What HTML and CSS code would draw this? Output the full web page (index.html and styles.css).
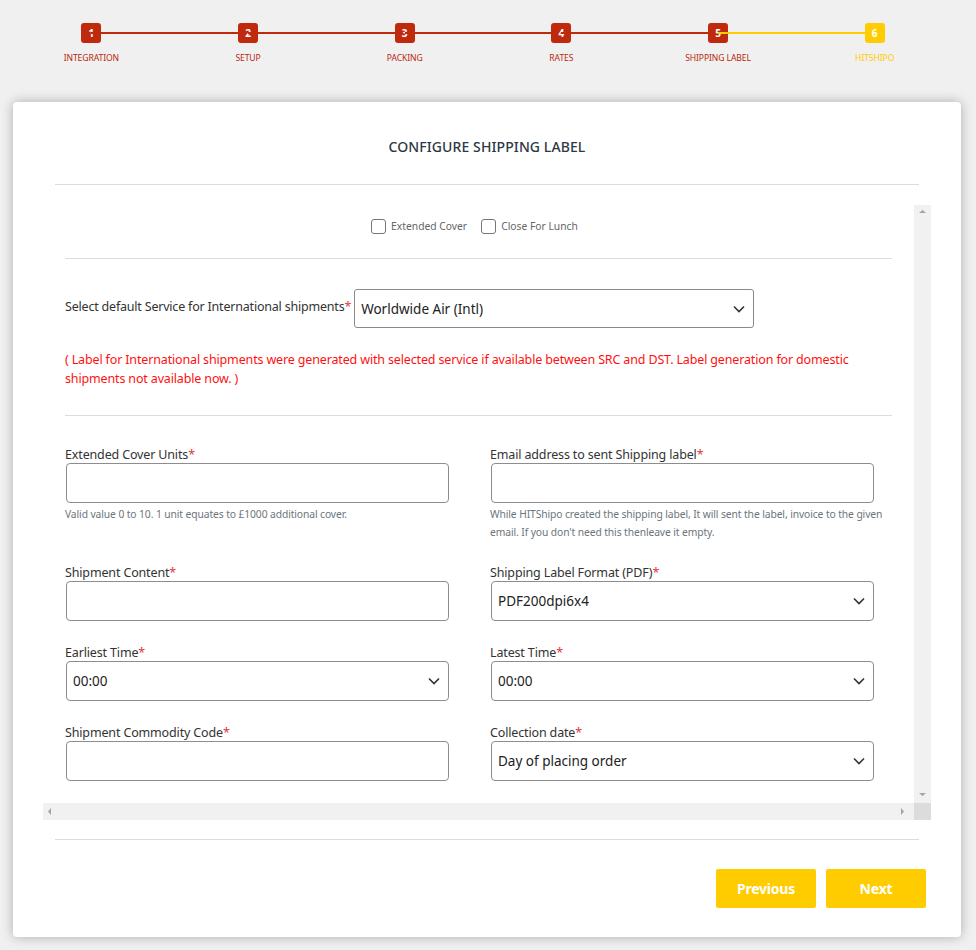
FILE: index.html
```html
<!DOCTYPE html>
<html lang="en">
<head>
<meta charset="utf-8">
<title>Configure Shipping Label</title>
<link rel="stylesheet" href="styles.css">
</head>
<body>
<div class="stepper">
  <div class="step done"><div class="num">1</div><div class="lbl">INTEGRATION</div></div>
  <div class="step done"><div class="num">2</div><div class="lbl">SETUP</div></div>
  <div class="step done"><div class="num">3</div><div class="lbl">PACKING</div></div>
  <div class="step done"><div class="num">4</div><div class="lbl">RATES</div></div>
  <div class="step done"><div class="num">5</div><div class="lbl">SHIPPING LABEL</div></div>
  <div class="step active"><div class="num">6</div><div class="lbl">HITSHIPO</div></div>
</div>

<div class="card">
  <h2 class="title">CONFIGURE SHIPPING LABEL</h2>
  <div class="rule"></div>

  <div class="scrollbox">
    <div class="viewport">
      <div class="content">
        <div class="checks">
          <label class="check"><span class="box"></span>Extended Cover</label>
          <label class="check"><span class="box"></span>Close For Lunch</label>
        </div>
        <div class="inner-rule"></div>
        <div class="service-row">
          <span class="service-label">Select default Service for International shipments<span class="req">*</span></span>
          <div class="select wide"><span>Worldwide Air (Intl)</span><svg class="chev" width="12" height="8" viewBox="0 0 12 8"><polyline points="1,1.5 6,6.5 11,1.5" fill="none" stroke="#333" stroke-width="1.6"/></svg></div>
        </div>
        <p class="notice">( Label for International shipments were generated with selected service if available between SRC and DST. Label generation for domestic shipments not available now. )</p>
        <div class="inner-rule second"></div>

        <div class="grid">
          <div class="field tall">
            <div class="flabel">Extended Cover Units<span class="req">*</span></div>
            <div class="input"></div>
            <div class="help">Valid value 0 to 10. 1 unit equates to £1000 additional cover.</div>
          </div>
          <div class="field tall">
            <div class="flabel">Email address to sent Shipping label<span class="req">*</span></div>
            <div class="input"></div>
            <div class="help">While HITShipo created the shipping label, It will sent the label, invoice to the given email. If you don't need this thenleave it empty.</div>
          </div>
          <div class="field">
            <div class="flabel">Shipment Content<span class="req">*</span></div>
            <div class="input"></div>
          </div>
          <div class="field">
            <div class="flabel">Shipping Label Format (PDF)<span class="req">*</span></div>
            <div class="input select"><span>PDF200dpi6x4</span><svg class="chev" width="12" height="8" viewBox="0 0 12 8"><polyline points="1,1.5 6,6.5 11,1.5" fill="none" stroke="#333" stroke-width="1.6"/></svg></div>
          </div>
          <div class="field">
            <div class="flabel">Earliest Time<span class="req">*</span></div>
            <div class="input select"><span>00:00</span><svg class="chev" width="12" height="8" viewBox="0 0 12 8"><polyline points="1,1.5 6,6.5 11,1.5" fill="none" stroke="#333" stroke-width="1.6"/></svg></div>
          </div>
          <div class="field">
            <div class="flabel">Latest Time<span class="req">*</span></div>
            <div class="input select"><span>00:00</span><svg class="chev" width="12" height="8" viewBox="0 0 12 8"><polyline points="1,1.5 6,6.5 11,1.5" fill="none" stroke="#333" stroke-width="1.6"/></svg></div>
          </div>
          <div class="field">
            <div class="flabel">Shipment Commodity Code<span class="req">*</span></div>
            <div class="input"></div>
          </div>
          <div class="field">
            <div class="flabel">Collection date<span class="req">*</span></div>
            <div class="input select"><span>Day of placing order</span><svg class="chev" width="12" height="8" viewBox="0 0 12 8"><polyline points="1,1.5 6,6.5 11,1.5" fill="none" stroke="#333" stroke-width="1.6"/></svg></div>
          </div>
        </div>
      </div>
    </div>
    <div class="vbar">
      <svg width="17" height="17" viewBox="0 0 17 17"><polygon points="5,8 12,8 8.5,5" fill="#a3a3a3"/></svg>
      <svg width="17" height="17" viewBox="0 0 17 17"><polygon points="5,7 12,7 8.5,10" fill="#a3a3a3"/></svg>
    </div>
    <div class="hbar">
      <svg width="17" height="17" viewBox="0 0 17 17"><polygon points="8,5 8,12 5,8.5" fill="#a3a3a3"/></svg>
      <svg width="17" height="17" viewBox="0 0 17 17"><polygon points="4,5 4,12 7,8.5" fill="#a3a3a3"/></svg>
    </div>
    <div class="corner"></div>
  </div>

  <div class="rule bottom"></div>
  <div class="actions">
    <button class="btn">Previous</button>
    <button class="btn">Next</button>
  </div>
</div>
</body>
</html>
```

FILE: styles.css
```css
* { box-sizing: border-box; }
html, body { margin: 0; padding: 0; }
body {
  background: #f0f0f0;
  font-family: "Noto Sans", "Open Sans", sans-serif;
  color: #333;
  width: 976px;
  height: 950px;
  overflow: hidden;
}

/* stepper */
.stepper {
  display: flex;
  padding: 23px 23px 0 13px;
  height: 102px;
}
.step {
  flex: 1 1 0;
  display: flex;
  flex-direction: column;
  align-items: center;
  position: relative;
}
.step::before {
  content: "";
  position: absolute;
  top: 9px;
  right: 50%;
  width: 100%;
  height: 2px;
  background: #bf2a0d;
}
.step:first-child::before { display: none; }
.step.active::before { background: #ffcc00; }
.num {
  position: relative;
  width: 20px;
  height: 20px;
  border-radius: 3px;
  background: #bf2a0d;
  color: #fff;
  font-size: 10px;
  font-weight: 700;
  line-height: 20px;
  text-align: center;
}
.step.active .num { background: #ffcc00; }
.lbl {
  margin-top: 9px;
  font-size: 8.6px;
  color: #b8290f;
  letter-spacing: -0.1px;
}
.step.active .lbl { color: #ffcc00; }

/* card */
.card {
  margin: 0 15px 0 13px;
  background: #fff;
  border-radius: 4px;
  box-shadow: 0 0 12px rgba(0,0,0,0.28);
  padding: 35px 30px 29px;
  height: 835px;
}
.title {
  margin: 0;
  text-align: center;
  font-weight: 500;
  font-size: 14px;
  line-height: 20px;
  color: #2c3845;
  letter-spacing: 0.1px;
}
.rule {
  height: 1px;
  background: #dcdcdc;
  margin: 27px 12px 20px;
}
.rule.bottom { margin: 19px 12px 29px; }

/* scroll area */
.scrollbox {
  display: grid;
  grid-template-columns: 871px 17px;
  grid-template-rows: 598px 17px;
}
.viewport {
  overflow: hidden;
  background: #fff;
}
.content {
  padding: 12px 22px 0 22px;
}
.vbar {
  background: #f1f1f1;
  display: flex;
  flex-direction: column;
  justify-content: space-between;
}
.hbar {
  background: #f1f1f1;
  display: flex;
  justify-content: space-between;
}
.vbar svg, .hbar svg { display: block; }
.corner { background: #dcdcdc; }

.checks {
  display: flex;
  justify-content: center;
  gap: 14px;
  height: 18px;
  align-items: center;
  padding-right: 8px;
}
.check {
  display: flex;
  align-items: center;
  font-size: 10.3px;
  color: #666;
}
.box {
  width: 15px;
  height: 15px;
  border: 1px solid #767676;
  border-radius: 3px;
  margin-right: 5px;
}
.inner-rule {
  height: 1px;
  background: #dcdcdc;
  margin: 23px 0 30px;
}
.inner-rule.second { margin: 27px 0 30px; }

.service-row {
  display: flex;
  align-items: center;
}
.service-label {
  font-size: 12.5px;
  color: #333;
  margin-right: 3px;
  margin-top: -4px;
  letter-spacing: -0.2px;
}
.req { color: #e4363b; }
.select {
  display: flex;
  align-items: center;
  justify-content: space-between;
  border: 1px solid #8a8a8a;
  border-radius: 3px;
  padding: 0 8px 0 6px;
  font-size: 13.5px;
  color: #222;
}
.select.wide {
  width: 400px;
  height: 39px;
}
.notice {
  margin: 22px 0 0;
  color: #ff1010;
  font-size: 12.5px;
  line-height: 19px;
  letter-spacing: -0.15px;
}

.grid {
  display: grid;
  grid-template-columns: 405px 402px;
  column-gap: 20px;
}
.field { height: 80px; }
.field.tall { height: 118px; }
.field .flabel {
  font-size: 12.5px;
  line-height: 17px;
  color: #333;
  letter-spacing: -0.15px;
}
.input {
  width: 383px;
  height: 40px;
  border: 1px solid #8d8d8d;
  border-radius: 4px;
  margin-left: 1px;
}
.input.select { padding: 0 8px 0 6px; }
.help {
  font-size: 10.3px;
  line-height: 18px;
  color: #6c757d;
  margin-top: 2px;
  letter-spacing: -0.1px;
}

/* buttons */
.actions {
  display: flex;
  justify-content: flex-end;
  gap: 10px;
  padding-right: 5px;
}
.btn {
  width: 100px;
  height: 39px;
  border: 0;
  border-radius: 2px;
  background: #ffcc00;
  color: #fff;
  font-family: "Noto Sans", sans-serif;
  font-weight: 700;
  font-size: 14px;
  letter-spacing: -0.2px;
}
```
